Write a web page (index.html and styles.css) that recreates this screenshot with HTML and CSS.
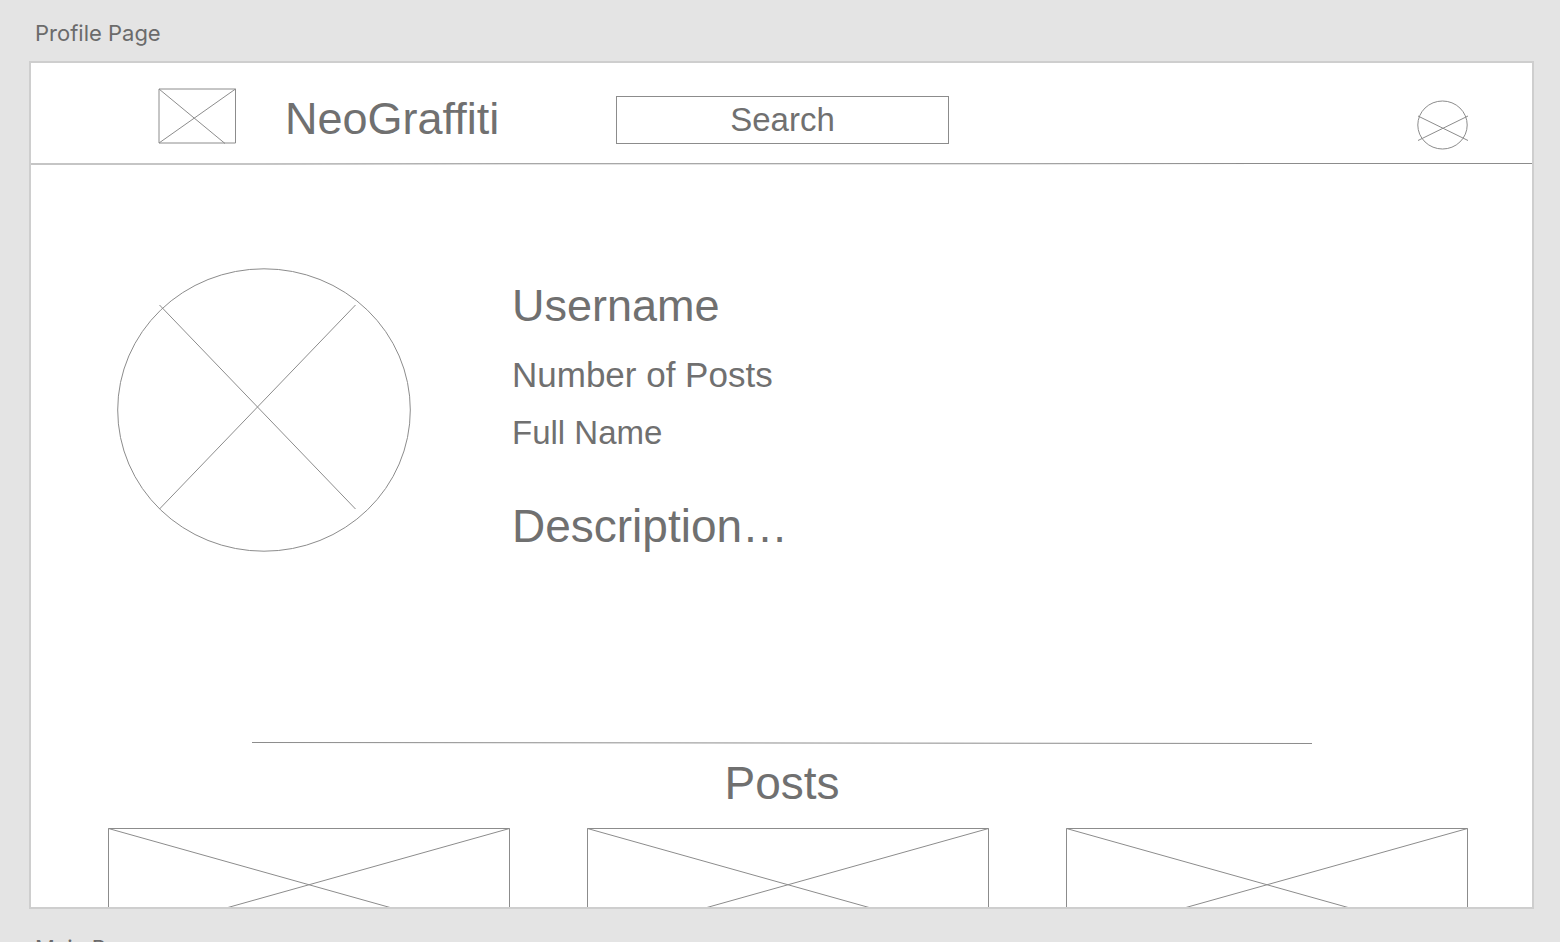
FILE: index.html
```html
<!DOCTYPE html>
<html lang="en">
<head>
<meta charset="utf-8">
<title>Profile Page</title>
<link rel="stylesheet" href="styles.css">
</head>
<body>
<p class="board-label">Profile Page</p>
<main class="board">
  <header class="topbar">
    <svg class="logo" viewBox="0 0 78 56" aria-hidden="true"><path d="M1 1H77.500V55H1ZM1 1L67 55.500M77.500 1L1 55"/></svg>
    <h1 class="title name brand">NeoGraffiti</h1>
    <input class="search" type="text" placeholder="Search" aria-label="Search">
    <svg class="avatar" viewBox="0 0 52 50" aria-hidden="true"><ellipse cx="25.500" cy="25" rx="24.700" ry="24"/><path d="M1 16L51 40.500M51 16L1 40.500"/></svg>
  </header>
  <svg class="rule" viewBox="0 0 1500 2" preserveAspectRatio="none" aria-hidden="true"><path d="M0 1L1500 0.500"/></svg>
  <section class="profile">
    <svg class="portrait" viewBox="0 0 294 284" aria-hidden="true"><ellipse cx="147" cy="142" rx="146.300" ry="141.200"/><path d="M42.500 37L238.500 241M238.500 37L42.500 241"/></svg>
    <div class="info">
      <h2 class="title name">Username</h2>
      <p class="posts-count">Number of Posts</p>
      <p class="full-name">Full Name</p>
      <p class="title description">Description…</p>
    </div>
  </section>
  <svg class="rule inset" viewBox="0 0 1060 2" preserveAspectRatio="none" aria-hidden="true"><path d="M0 0.500L1060 1.500"/></svg>
  <section class="posts">
    <h2 class="title posts-title">Posts</h2>
    <div class="grid">
      <svg class="post" viewBox="0 0 402 115" aria-hidden="true"><path d="M0.500 115V0.500H401.500V115M0.500 0.500L401.500 113M401.500 0.500L0.500 113"/></svg>
      <svg class="post" viewBox="0 0 402 115" aria-hidden="true"><path d="M0.500 115V0.500H401.500V115M0.500 0.500L401.500 113M401.500 0.500L0.500 113"/></svg>
      <svg class="post" viewBox="0 0 402 115" aria-hidden="true"><path d="M0.500 115V0.500H401.500V115M0.500 0.500L401.500 113M401.500 0.500L0.500 113"/></svg>
    </div>
  </section>
</main>
<p class="board-label next">Main Page</p>
</body>
</html>
```
FILE: styles.css
```css
* { box-sizing: border-box; }

body {
  margin: 0;
  height: 100vh;
  display: flex;
  flex-direction: column;
  overflow: hidden;
  background: #e4e4e4;
  color: #707070;
  font-family: "Liberation Sans", Arial, sans-serif;
}

h1, h2, p { margin: 0; font-weight: 400; }

svg {
  display: block;
  flex: none;
  fill: none;
  stroke: #8c8c8c;
  stroke-width: 1px;
}

.board-label {
  flex: none;
  height: 61px;
  padding: 19px 35px 0;
  font: 22px/28px Inter, "Liberation Sans", sans-serif;
  color: #6b6b6b;
}

.board-label.next { height: 33px; padding-top: 25px; }

.board {
  flex: 1;
  min-height: 0;
  margin: 0 26px 0 29px;
  border: 2px solid #cecece;
  background: #fff;
  overflow: hidden;
}

.title { font-size: 46px; line-height: 52px; }
.title.name { font-size: 45px; }

.topbar {
  display: flex;
  align-items: flex-start;
  height: 100px;
  padding: 0 63px 0 127px;
}

.logo { width: 78px; height: 56px; margin-top: 25px; }
.brand { width: 220px; margin: 30px 111px 0 49px; }

.search {
  width: 333px;
  height: 48px;
  margin-top: 33px;
  padding: 0;
  border: 1px solid #8c8c8c;
  border-radius: 0;
  background: #fff;
  color: #707070;
  font: 33px/38px "Liberation Sans", Arial, sans-serif;
  text-align: center;
}

.search::placeholder { color: #707070; opacity: 1; }

.avatar { width: 52px; height: 50px; margin: 37px 0 0 auto; }

.rule { width: 100%; height: 2px; }
.rule.inset { width: auto; margin: 0 220px 0 221px; }

.profile {
  display: flex;
  gap: 101px;
  padding: 103px 85px 190px 86px;
}

.portrait { width: 294px; height: 284px; }
.info { padding-top: 12px; }
.posts-count { margin-top: 24px; font-size: 35px; line-height: 38px; }
.full-name { margin-top: 20px; font-size: 33px; line-height: 38px; }
.description { margin-top: 48px; }

.posts { padding: 13px 64px 0 77px; }
.posts-title { text-align: center; padding-right: 12px; }

.grid {
  display: grid;
  grid-template-columns: repeat(3, 1fr);
  gap: 77px;
  margin-top: 19px;
}

.post { width: 100%; }
```
